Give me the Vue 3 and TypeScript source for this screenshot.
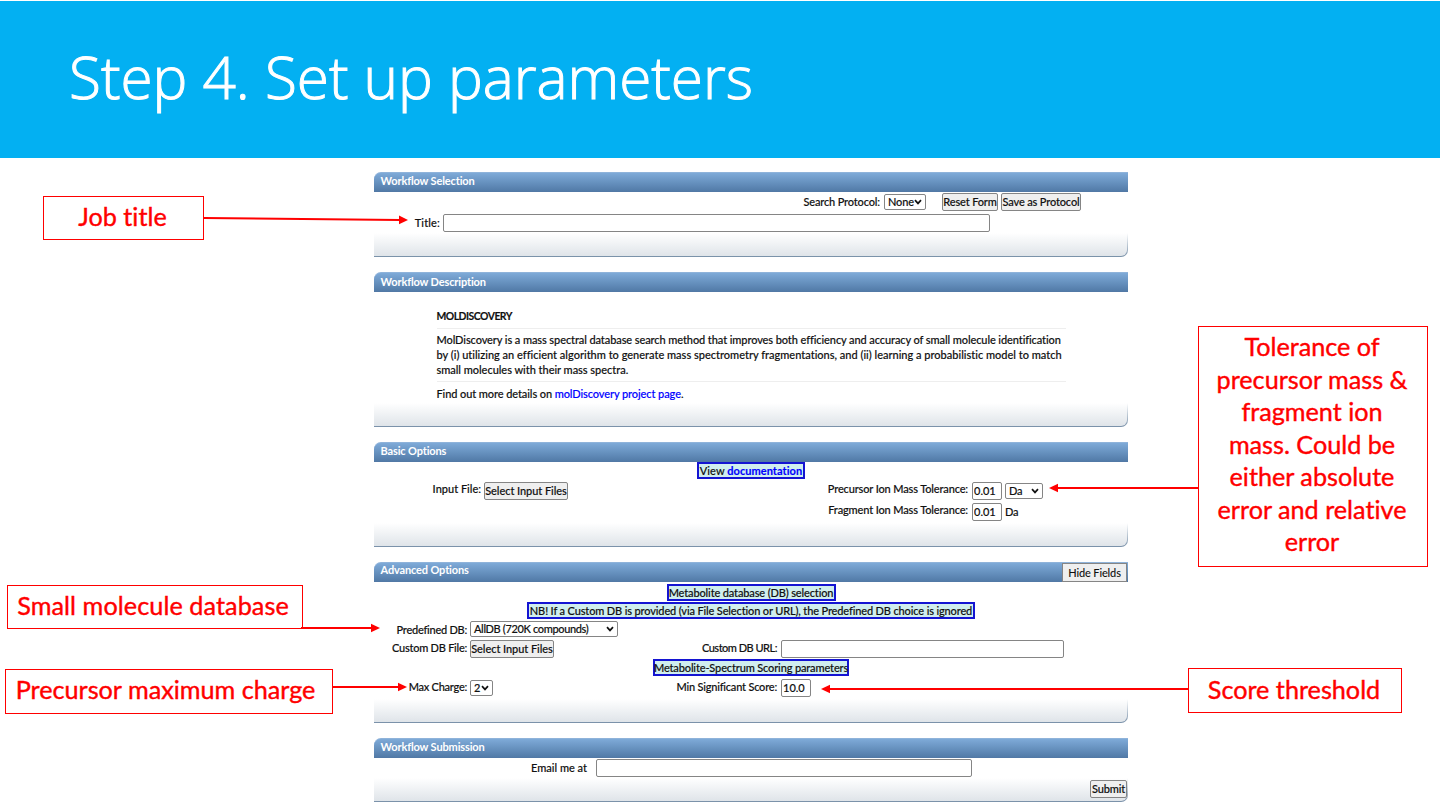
<script setup lang="ts">
interface Callout {
  name: string
  text: string
}

interface Arrow {
  line: string
  head: string
}

const callouts: Callout[] = [
  { name: 'job', text: 'Job title' },
  { name: 'database', text: 'Small molecule database' },
  { name: 'charge', text: 'Precursor maximum charge' },
  { name: 'score', text: 'Score threshold' },
]

const toleranceLines: string[] = [
  'Tolerance of',
  'precursor mass &',
  'fragment ion',
  'mass. Could be',
  'either absolute',
  'error and relative',
  'error',
]

const arrows: Arrow[] = [
  { line: 'M204 218L400 219.9', head: 'M399 215.5L408 220L399 224.3Z' },
  { line: 'M301 628H372', head: 'M371 623.7L380 628L371 632.3Z' },
  { line: 'M333 687H399', head: 'M398 682.7L407 687L398 691.3Z' },
  { line: 'M1198 488H1057', head: 'M1058 483.7L1049 488L1058 492.3Z' },
  { line: 'M1188 689H829', head: 'M830 684.7L821 689L830 693.3Z' },
]
</script>

<template>
  <main class="slide">
    <header class="banner">
      <h1>Step 4. Set up parameters</h1>
    </header>

    <div class="form">
      <section class="panel selection">
        <h2>Workflow Selection</h2>
        <div class="body">
          <div class="row">
            <label class="to-protocol">Search Protocol:</label>
            <span class="select none">None<svg viewBox="0 0 8 6"><path d="M1 1.2L4 4.4L7 1.2" /></svg></span>
            <button class="reset">Reset Form</button>
            <button class="save">Save as Protocol</button>
          </div>
          <div class="row">
            <label class="to-title">Title:</label>
            <input class="title-input" />
          </div>
        </div>
        <footer></footer>
      </section>

      <section class="panel description">
        <h2>Workflow Description</h2>
        <div class="body about">
          <h3>MOLDISCOVERY</h3>
          <p>
            <span class="l1">MolDiscovery is a mass spectral database search method that improves both efficiency and accuracy of small molecule identification</span><br />
            <span class="l2">by (i) utilizing an efficient algorithm to generate mass spectrometry fragmentations, and (ii) learning a probabilistic model to match</span><br />
            <span class="l3">small molecules with their mass spectra.</span>
          </p>
          <div class="more">Find out more details on <a>molDiscovery project page</a>.</div>
        </div>
        <footer></footer>
      </section>

      <section class="panel basic">
        <h2>Basic Options</h2>
        <div class="body">
          <div class="note-row"><span class="note doc">View <b>documentation</b></span></div>
          <div class="row tol-row">
            <label class="to-file raised">Input File:</label>
            <button class="files">Select Input Files</button>
            <label class="to-tol raised">Precursor Ion Mass Tolerance:</label>
            <input class="num" value="0.01" />
            <span class="select unit">Da<svg viewBox="0 0 8 6"><path d="M1 1.2L4 4.4L7 1.2" /></svg></span>
          </div>
          <div class="row">
            <label class="to-frag raised">Fragment Ion Mass Tolerance:</label>
            <input class="num" value="0.01" />
            <span class="plain-unit">Da</span>
          </div>
        </div>
        <footer></footer>
      </section>

      <section class="panel advanced">
        <h2><span>Advanced Options</span><button class="hide">Hide Fields</button></h2>
        <div class="body">
          <div class="note-row"><span class="note db">Metabolite database (DB) selection</span></div>
          <div class="note-row"><span class="note nb">NB! If a Custom DB is provided (via File Selection or URL), the Predefined DB choice is ignored</span></div>
          <div class="row short">
            <label class="to-db">Predefined DB:</label>
            <span class="select all-db">AllDB (720K compounds)<svg viewBox="0 0 8 6"><path d="M1 1.2L4 4.4L7 1.2" /></svg></span>
          </div>
          <div class="row">
            <label class="to-db raised">Custom DB File:</label>
            <button class="files">Select Input Files</button>
            <label class="to-url raised">Custom DB URL:</label>
            <input class="url" />
          </div>
          <div class="note-row"><span class="note scoring">Metabolite-Spectrum Scoring parameters</span></div>
          <div class="row">
            <label class="to-db raised">Max Charge:</label>
            <span class="select two">2<svg viewBox="0 0 8 6"><path d="M1 1.2L4 4.4L7 1.2" /></svg></span>
            <label class="to-min raised">Min Significant Score:</label>
            <input class="num" value="10.0" />
          </div>
        </div>
        <footer></footer>
      </section>

      <section class="panel submission">
        <h2>Workflow Submission</h2>
        <div class="body">
          <div class="row">
            <label class="to-email">Email me at</label>
            <input class="email" />
          </div>
        </div>
        <footer><button class="submit">Submit</button></footer>
      </section>
    </div>

    <div v-for="c in callouts" :key="c.name" class="callout" :class="c.name"><span>{{ c.text }}</span></div>
    <div class="callout tolerance">
      <span v-for="line in toleranceLines" :key="line">{{ line }}</span>
    </div>

    <svg class="arrows" viewBox="0 0 1440 810">
      <g v-for="a in arrows" :key="a.line">
        <path :d="a.line" stroke="#f00" stroke-width="2" />
        <path :d="a.head" fill="#f00" />
      </g>
    </svg>
  </main>
</template>

<style>
body {
  margin: 0;
  background: #fff;
}
</style>

<style scoped>
* {
  box-sizing: border-box;
}

.slide {
  position: relative;
  width: 1440px;
  height: 810px;
  overflow: hidden;
  padding-top: 1px;
  background: #fff;
  font-family: Lato, "Open Sans", sans-serif;
  font-variant-ligatures: none;
}

.banner {
  display: flex;
  align-items: center;
  height: 157px;
  padding-left: 69px;
  background: #03b0f2;
}

h1 {
  margin: 0;
  padding-bottom: 8px;
  color: #fff;
  font: 300 58.5px/80px "Open Sans", sans-serif;
  letter-spacing: -0.03px;
  -webkit-text-stroke: 1px #fff;
  white-space: nowrap;
}

.form {
  display: flex;
  flex-direction: column;
  gap: 15px;
  width: 754px;
  margin: 14px 0 0 374px;
  color: #111;
  font-size: 11px;
  font-weight: 500;
  letter-spacing: -0.14px;
  -webkit-text-stroke: 0.15px currentColor;
  white-space: nowrap;
}

.panel {
  display: flex;
  flex-direction: column;
}

.selection { height: 85px; }
.description { height: 155px; }
.basic { height: 105px; }
.advanced { height: 161px; }
.submission { height: 64px; }

h2 {
  display: flex;
  justify-content: space-between;
  flex: none;
  height: 20px;
  margin: 0;
  padding-left: 6.5px;
  border-top: 1px solid #8fb3da;
  border-bottom: 1px solid #5279a6;
  border-radius: 7px 0 0 0;
  background: linear-gradient(#7eaad8, #527ba8);
  color: #fff;
  font-size: 11px;
  font-weight: 700;
  line-height: 16px;
  -webkit-text-stroke: 0;
}

.description h2 { line-height: 17px; }
.advanced h2 span { line-height: 14px; }

.body {
  flex: 1;
  min-height: 0;
}

.selection .body,
.submission .body { margin-top: -1px; }

footer {
  display: flex;
  justify-content: flex-end;
  flex: none;
  height: 24px;
  padding-top: 2px;
  border: 0 solid transparent;
  border-width: 0 1px 1.5px 0;
  border-radius: 0 0 7px 0;
  background:
    linear-gradient(#fff, #dfe4e9) padding-box,
    linear-gradient(#fff, #7890a8) border-box;
}

.row {
  display: flex;
  align-items: center;
  height: 21px;
}

.short { height: 18px; }

label {
  flex: none;
  margin-right: 3px;
  text-align: right;
}

.raised { padding-bottom: 3px; }
.basic .raised { padding-bottom: 4px; }

input,
button,
.select {
  flex: none;
  height: 18px;
  margin: 0;
  border: 1px solid #858585;
  border-radius: 2px;
  color: #111;
  font: 500 11px/14px Lato, "Open Sans", sans-serif;
  letter-spacing: -0.14px;
}

input {
  padding: 0 1px;
  background: #fff;
  letter-spacing: 0;
}

button {
  display: flex;
  justify-content: center;
  align-items: center;
  padding: 0;
  background: #efefef;
}

.select {
  display: flex;
  align-items: center;
  justify-content: space-between;
  height: 16px;
  padding: 0 3px;
  background: #fff;
}

.select svg {
  width: 8px;
  height: 6px;
  fill: none;
  stroke: #111;
  stroke-width: 1.7;
}

.to-protocol { width: 506px; }
.none { width: 42px; margin-left: 1px; }
.reset { width: 56px; margin-left: 16px; }
.save { width: 80px; margin-left: 3px; }
.to-title { width: 66px; letter-spacing: 0.15px; }
.title-input { width: 547px; }

.about { padding: 16px 62px 0 62.5px; }

h3 {
  height: 21px;
  margin: 0;
  padding-top: 1px;
  border-bottom: 1px solid #eee;
  font-size: 10.4px;
  letter-spacing: -0.5px;
  line-height: 15px;
}

p {
  height: 53px;
  margin: 0;
  padding-top: 3px;
  border-bottom: 1px solid #eee;
  line-height: 15px;
}

.l1 { letter-spacing: -0.09px; }
.l2 { letter-spacing: 0.002px; }
.l3 { letter-spacing: -0.03px; }

.more {
  padding-top: 4px;
  letter-spacing: -0.09px;
  line-height: 15px;
}

a,
b { color: #00f; }

.note-row {
  display: flex;
  justify-content: center;
  height: 18px;
}

.note {
  display: flex;
  justify-content: center;
  height: 17px;
  border: 2px solid #1414d2;
  background: #d0eeee;
  line-height: 13px;
  white-space: pre;
}

.doc { width: 108px; letter-spacing: 0.05px; }
.db { width: 169px; }
.nb { width: 448px; }
.scoring { width: 196px; }

.to-file { width: 107px; letter-spacing: 0; }
.files { width: 84px; letter-spacing: -0.06px; }
.to-tol { width: 400px; }
.to-frag { width: 594px; }
.num { width: 30px; margin-left: 1px; }
.unit { width: 38px; margin-left: 3px; }
.plain-unit { margin-left: 3px; }

.advanced .body { padding-top: 2px; }
.to-db { width: 93px; letter-spacing: -0.25px; }
.all-db { width: 148px; letter-spacing: -0.35px; }
.to-url { width: 223px; letter-spacing: -0.5px; }
.url { width: 283px; margin-left: 1px; }
.two { width: 23px; }
.to-min { width: 284px; letter-spacing: -0.2px; }
.hide { width: 65px; height: 19px; margin-right: 1px; border-radius: 0; }

.to-email { width: 213px; letter-spacing: 0; }
.email { width: 376px; margin-left: 6px; }
.submit { width: 37px; }

.callout {
  position: absolute;
  display: flex;
  flex-direction: column;
  align-items: center;
  border: 1px solid #f00;
  background: #fff;
  color: #f00;
  font-size: 25.2px;
  font-weight: 400;
  line-height: 32.5px;
  -webkit-text-stroke: 0.4px #f00;
  white-space: nowrap;
}

.job { left: 43px; top: 196px; width: 161px; height: 44px; padding: 3px 2px 0 0; }
.database { left: 7px; top: 585px; width: 296px; height: 44px; padding: 3px 4px 0 0; letter-spacing: 0.08px; }
.charge { left: 5px; top: 669px; width: 328px; height: 45px; padding: 3px 7px 0 0; }
.score { left: 1188px; top: 668px; width: 214px; height: 45px; padding: 4px 2px 0 0; }
.tolerance { left: 1198px; top: 326px; width: 230px; height: 241px; padding: 3px 2px 0 0; }

.arrows {
  position: absolute;
  left: 0;
  top: 0;
  width: 1440px;
  height: 810px;
  fill: none;
}
</style>
